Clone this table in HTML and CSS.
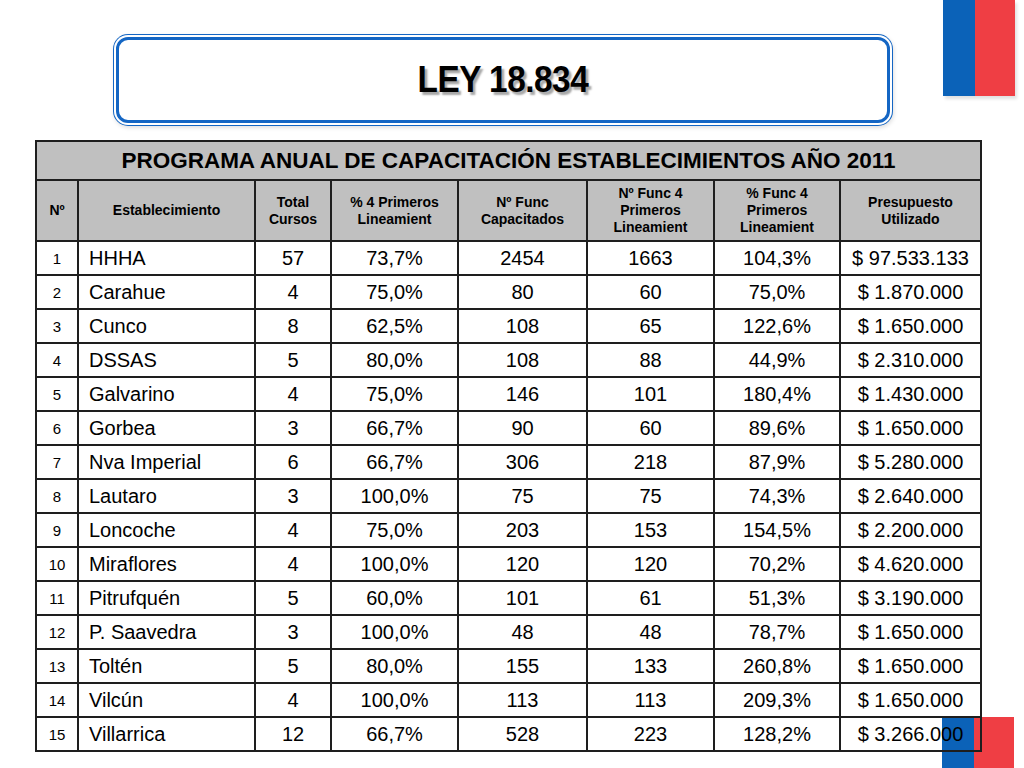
FILE: index.html
```html
<!DOCTYPE html>
<html lang="es">
<head>
<meta charset="utf-8">
<title>LEY 18.834</title>
<link rel="stylesheet" href="styles.css">
</head>
<body>
<div class="logo logo-top"><span class="blue"></span><span class="red"></span></div>
<div class="logo logo-bottom"><span class="blue"></span><span class="red"></span></div>
<main class="page">
  <header class="title-box">
    <h1 class="title">LEY 18.834</h1>
  </header>
  <table class="grid">
    <colgroup>
      <col class="c-n"><col class="c-est"><col class="c-tot"><col class="c-p4"><col class="c-nf"><col class="c-nf4"><col class="c-pf4"><col class="c-pre">
    </colgroup>
    <thead>
      <tr class="row-caption"><th colspan="8">PROGRAMA ANUAL DE CAPACITACIÓN ESTABLECIMIENTOS AÑO 2011</th></tr>
      <tr class="row-head">
        <th>Nº</th>
        <th>Establecimiento</th>
        <th>Total<br>Cursos</th>
        <th>% 4 Primeros<br>Lineamient</th>
        <th>Nº Func<br>Capacitados</th>
        <th>Nº Func 4<br>Primeros<br>Lineamient</th>
        <th>% Func 4<br>Primeros<br>Lineamient</th>
        <th>Presupuesto<br>Utilizado</th>
      </tr>
    </thead>
    <tbody>
      <tr><td class="num">1</td><td class="name">HHHA</td><td>57</td><td>73,7%</td><td>2454</td><td>1663</td><td>104,3%</td><td>$ 97.533.133</td></tr>
      <tr><td class="num">2</td><td class="name">Carahue</td><td>4</td><td>75,0%</td><td>80</td><td>60</td><td>75,0%</td><td>$ 1.870.000</td></tr>
      <tr><td class="num">3</td><td class="name">Cunco</td><td>8</td><td>62,5%</td><td>108</td><td>65</td><td>122,6%</td><td>$ 1.650.000</td></tr>
      <tr><td class="num">4</td><td class="name">DSSAS</td><td>5</td><td>80,0%</td><td>108</td><td>88</td><td>44,9%</td><td>$ 2.310.000</td></tr>
      <tr><td class="num">5</td><td class="name">Galvarino</td><td>4</td><td>75,0%</td><td>146</td><td>101</td><td>180,4%</td><td>$ 1.430.000</td></tr>
      <tr><td class="num">6</td><td class="name">Gorbea</td><td>3</td><td>66,7%</td><td>90</td><td>60</td><td>89,6%</td><td>$ 1.650.000</td></tr>
      <tr><td class="num">7</td><td class="name">Nva Imperial</td><td>6</td><td>66,7%</td><td>306</td><td>218</td><td>87,9%</td><td>$ 5.280.000</td></tr>
      <tr><td class="num">8</td><td class="name">Lautaro</td><td>3</td><td>100,0%</td><td>75</td><td>75</td><td>74,3%</td><td>$ 2.640.000</td></tr>
      <tr><td class="num">9</td><td class="name">Loncoche</td><td>4</td><td>75,0%</td><td>203</td><td>153</td><td>154,5%</td><td>$ 2.200.000</td></tr>
      <tr><td class="num">10</td><td class="name">Miraflores</td><td>4</td><td>100,0%</td><td>120</td><td>120</td><td>70,2%</td><td>$ 4.620.000</td></tr>
      <tr><td class="num">11</td><td class="name">Pitrufquén</td><td>5</td><td>60,0%</td><td>101</td><td>61</td><td>51,3%</td><td>$ 3.190.000</td></tr>
      <tr><td class="num">12</td><td class="name">P. Saavedra</td><td>3</td><td>100,0%</td><td>48</td><td>48</td><td>78,7%</td><td>$ 1.650.000</td></tr>
      <tr><td class="num">13</td><td class="name">Toltén</td><td>5</td><td>80,0%</td><td>155</td><td>133</td><td>260,8%</td><td>$ 1.650.000</td></tr>
      <tr><td class="num">14</td><td class="name">Vilcún</td><td>4</td><td>100,0%</td><td>113</td><td>113</td><td>209,3%</td><td>$ 1.650.000</td></tr>
      <tr><td class="num">15</td><td class="name">Villarrica</td><td>12</td><td>66,7%</td><td>528</td><td>223</td><td>128,2%</td><td>$ 3.266.000</td></tr>
    </tbody>
  </table>
</main>
</body>
</html>
```

FILE: styles.css
```css
html, body {
  margin: 0;
  padding: 0;
  background: #ffffff;
}
body {
  width: 1024px;
  height: 768px;
  overflow: hidden;
  position: relative;
  font-family: "Liberation Sans", Arial, sans-serif;
  color: #000;
}
.logo {
  position: absolute;
  display: flex;
  z-index: 0;
}
.logo .blue { background: #0b62b8; width: 32px; }
.logo .red { background: #ef3e44; width: 40px; }
.logo-top {
  left: 943px;
  top: 0;
  height: 96px;
  box-shadow: 2px 3px 3px rgba(0,0,0,0.12);
}
.logo-bottom {
  left: 942px;
  top: 717px;
  height: 51px;
}
.page {
  position: relative;
  z-index: 1;
  padding: 37px 0 0 0;
}
.title-box {
  margin-left: 116px;
  width: 768px;
  height: 80px;
  border: 3px solid #1466c4;
  border-radius: 12px;
  box-shadow: 0 0 0 2px #ffffff, 0 0 0 3px #1466c4, 1px 2px 4px 3px rgba(0,0,0,0.12);
  display: flex;
  align-items: center;
  justify-content: center;
  background: #fff;
}
.title {
  margin: 0;
  font-size: 37px;
  font-weight: bold;
  transform: scaleX(0.9);
  letter-spacing: -0.5px;
  text-shadow: 3px 3px 2px rgba(0,0,0,0.35);
}
.grid {
  margin: 17px 0 0 35px;
  width: 945px;
  border-collapse: collapse;
  table-layout: fixed;
}
.grid th, .grid td {
  border: 2px solid #1e1e1e;
  padding: 0;
  text-align: center;
  vertical-align: middle;
}
.c-n { width: 42px; }
.c-est { width: 177px; }
.c-tot { width: 76px; }
.c-p4 { width: 127px; }
.c-nf { width: 129px; }
.c-nf4 { width: 127px; }
.c-pf4 { width: 126px; }
.c-pre { width: 141px; }
.row-caption th {
  background: #c0c0c0;
  height: 37px;
  font-size: 22.5px;
  font-weight: bold;
}
.row-head th {
  background: #c0c0c0;
  height: 59px;
  font-size: 14px;
  line-height: 17px;
  font-weight: bold;
}
.grid tbody td {
  height: 32px;
  font-size: 20px;
}
.grid tbody td.num {
  font-size: 15px;
}
.grid tbody td.name {
  text-align: left;
  padding-left: 10px;
}
```
